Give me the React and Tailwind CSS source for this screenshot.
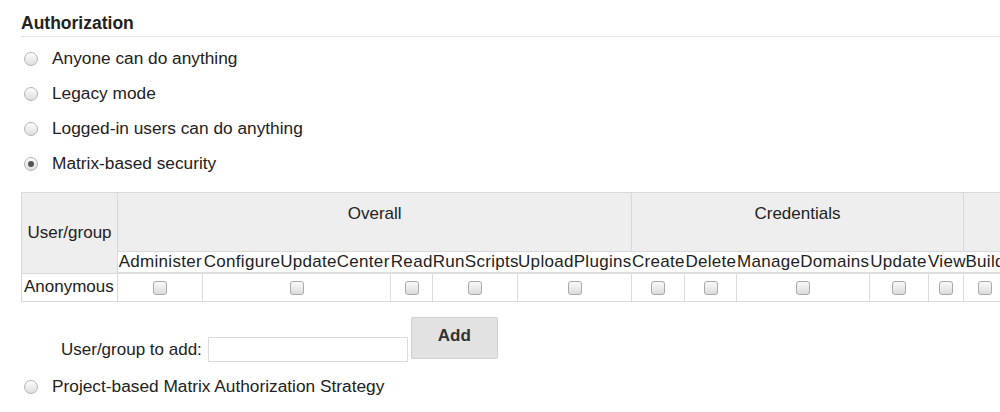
import React from "react";

const groups = [
  {
    name: "Overall",
    perms: [
      ["Administer", 85],
      ["ConfigureUpdateCenter", 188],
      ["Read", 42],
      ["RunScripts", 85],
      ["UploadPlugins", 114],
    ],
  },
  {
    name: "Credentials",
    perms: [
      ["Create", 53],
      ["Delete", 52],
      ["ManageDomains", 132],
      ["Update", 59],
      ["View", 35],
    ],
  },
  {
    name: "Agent",
    perms: [
      ["Build", 44],
      ["Configure", 78],
      ["Connect", 68],
      ["Create", 56],
      ["Delete", 56],
      ["Disconnect", 86],
    ],
  },
];

function Radio({ checked, label }) {
  return (
    <div className="flex h-[35px] items-center">
      <span className="ml-[3px] flex h-[14px] w-[14px] items-center justify-center rounded-full border border-[#b5b5b5] bg-gradient-to-b from-[#fdfdfd] to-[#dedede]">
        {checked && <span className="h-[6px] w-[6px] rounded-full bg-[#555]" />}
      </span>
      <span className="ml-[14px] text-[17.3px] text-[#222]">{label}</span>
    </div>
  );
}

function Checkbox() {
  return (
    <span className="inline-block h-[14px] w-[14px] rounded-[3px] border border-[#a9a9a9] bg-gradient-to-b from-[#fafafa] to-[#dcdcdc] align-middle" />
  );
}

export default function App() {
  const allPerms = groups.flatMap((g) => g.perms);

  return (
    <div
      className="h-[412px] w-[1000px] overflow-hidden bg-white pl-[21px] text-[#222]"
      style={{ fontFamily: '"Liberation Sans", Arial, sans-serif' }}
    >
      <div className="border-b border-[#e3e3e3] pb-[3px] pt-[13px] text-[17.5px] font-bold leading-[20px]">
        Authorization
      </div>

      <div className="mt-[4px]">
        <Radio label="Anyone can do anything" />
        <Radio label="Legacy mode" />
        <Radio label="Logged-in users can do anything" />
        <Radio checked label="Matrix-based security" />
      </div>

      <table className="mt-[11px] w-[1331px] table-fixed border-collapse border border-[#d9d9d9] text-[17px] leading-[20px]">
        <colgroup>
          <col style={{ width: 96 }} />
          {allPerms.map(([p, w], i) => (
            <col key={i} style={{ width: w }} />
          ))}
        </colgroup>
        <thead>
          <tr className="h-[59px]">
            <th
              rowSpan={2}
              className="border border-[#d9d9d9] bg-[#eeeeee] text-center align-middle font-normal"
            >
              User/group
            </th>
            {groups.map((g) => (
              <th
                key={g.name}
                colSpan={g.perms.length}
                className="border border-[#d9d9d9] bg-[#eeeeee] pt-[11px] text-center align-top font-normal"
              >
                {g.name}
              </th>
            ))}
          </tr>
          <tr className="h-[21px]">
            {allPerms.map(([p], i) => (
              <th
                key={i}
                className="whitespace-nowrap border-b-2 border-[#dddddd] p-0 text-center font-normal tracking-[0.3px]"
              >
                {p}
              </th>
            ))}
          </tr>
        </thead>
        <tbody>
          <tr className="h-[28px]">
            <td className="border border-[#d9d9d9] pl-[2px]">Anonymous</td>
            {allPerms.map(([p], i) => (
              <td key={i} className="border border-[#dddddd] text-center">
                <Checkbox />
              </td>
            ))}
          </tr>
        </tbody>
      </table>

      <div className="mt-[15px] flex items-start">
        <div className="mt-[20px] flex items-center pl-[40px]">
          <span className="text-[17px]">User/group to add:</span>
          <input className="ml-[6px] h-[25px] w-[200px] border border-[#dcdcdc] bg-white outline-none" />
        </div>
        <button className="ml-[3px] flex h-[42px] w-[87px] items-center justify-center rounded-[2px] border border-[#cfcfcf] bg-[#e2e2e2] pb-[4px] text-[17px] font-bold text-[#333]">
          Add
        </button>
      </div>

      <div className="mt-[7px]">
        <Radio label="Project-based Matrix Authorization Strategy" />
      </div>
    </div>
  );
}
